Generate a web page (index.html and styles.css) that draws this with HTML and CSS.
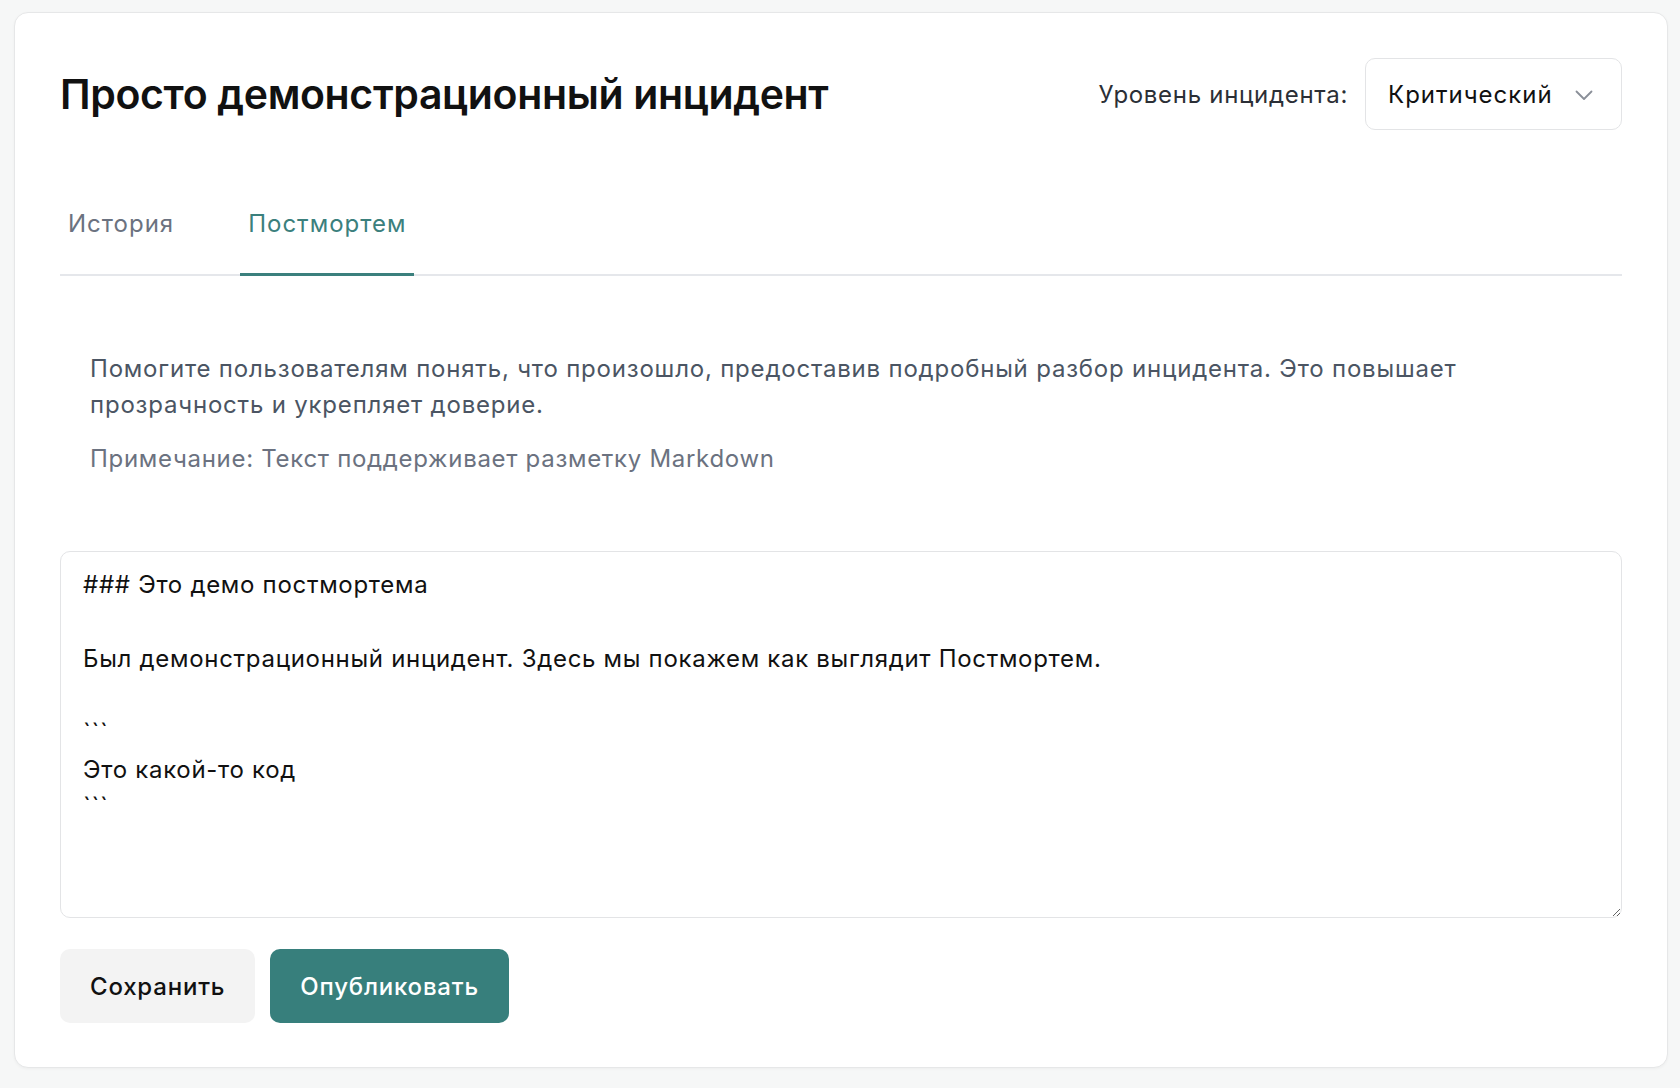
FILE: index.html
```html
<!DOCTYPE html>
<html lang="ru">
<head>
  <meta charset="UTF-8" />
  <meta name="viewport" content="width=device-width, initial-scale=1.0"/>
  <title>Постмортем инцидента</title>
  <link rel="stylesheet" href="styles.css">
</head>
<body>

  <!-- Incident card -->
  <div class="card">

    <!-- Header: title + severity -->
    <div class="header">
      <h1>Просто демонстрационный инцидент</h1>
      <div class="severity">
        <span class="severity-label">Уровень инцидента:</span>
        <div class="select">
          <span>Критический</span>
          <svg class="chevron" width="18" height="11" viewBox="0 0 18 11" fill="none">
            <path d="M1.5 1.5 L9 9 L16.5 1.5" stroke="#8a8f98" stroke-width="1.8" stroke-linecap="round" stroke-linejoin="round"/>
          </svg>
        </div>
      </div>
    </div>

    <!-- Tabs -->
    <div class="tabs">
      <a href="#" class="tab">История</a>
      <a href="#" class="tab active">Постмортем</a>
    </div>

    <!-- Hint -->
    <div class="hint">
      <p class="hint-text">Помогите пользователям понять, что произошло, предоставив подробный разбор инцидента. Это повышает прозрачность и укрепляет доверие.</p>
      <p class="hint-note">Примечание: Текст поддерживает разметку Markdown</p>
    </div>

    <textarea class="editor">### Это демо постмортема

Был демонстрационный инцидент. Здесь мы покажем как выглядит Постмортем.

&#96;&#96;&#96;
Это какой-то код
&#96;&#96;&#96;</textarea>

    <div class="actions">
      <button class="btn btn-secondary">Сохранить</button>
      <button class="btn btn-primary">Опубликовать</button>
    </div>

  </div>

</body>
</html>
```

FILE: styles.css
```css
html, body {
  margin: 0;
  padding: 0;
  background-color: #f6f7f7;
  font-family: Inter, "Noto Sans", sans-serif;
  color: #111111;
}

body {
  padding: 12px 12px 20px 14px;
}

.card {
  background-color: #ffffff;
  border: 1.5px solid #e6e7e8;
  border-radius: 14px;
  box-shadow: 0 1px 3px rgba(0, 0, 0, 0.04);
  padding: 45px 45px 44px 45px;
}

.header {
  display: flex;
  align-items: center;
  justify-content: space-between;
}

.header h1 {
  margin: 0;
  font-size: 41px;
  font-weight: 600;
  letter-spacing: -0.35px;
  color: #111111;
}

.severity {
  display: flex;
  align-items: center;
  gap: 17px;
}

.severity-label {
  font-size: 24px;
  letter-spacing: 0.7px;
  color: #2b2f36;
}

.select {
  display: flex;
  align-items: center;
  justify-content: space-between;
  box-sizing: border-box;
  width: 257px;
  height: 72px;
  padding: 0 28px 0 22px;
  border: 1.5px solid #e3e4e6;
  border-radius: 10px;
  font-size: 24px;
  letter-spacing: 1px;
  color: #111111;
}

.chevron {
  margin-top: 2px;
}

.tabs {
  display: flex;
  gap: 58px;
  margin-top: 64px;
  border-bottom: 2px solid #e5e7eb;
}

.tab {
  padding: 14px 8px 33px;
  font-size: 24px;
  line-height: 32px;
  letter-spacing: 1px;
  color: #6b7280;
  text-decoration: none;
  border-bottom: 3px solid transparent;
  margin-bottom: -2px;
}

.tab.active {
  color: #3b807d;
  border-bottom-color: #3b807d;
}

.hint {
  padding: 75px 30px 74px;
}

.hint p {
  margin: 0;
  font-size: 24px;
  line-height: 36px;
}

.hint-text {
  color: #4b5563;
  letter-spacing: 0.8px;
}

.hint-note {
  margin-top: 18px !important;
  letter-spacing: 0.7px;
  color: #6b7280;
}

.editor {
  display: block;
  box-sizing: border-box;
  width: 100%;
  height: 367px;
  padding: 14px 22px;
  border: 1.5px solid #e3e4e6;
  border-radius: 10px;
  font-family: Inter, "Noto Sans", sans-serif;
  font-size: 24px;
  line-height: 37px;
  letter-spacing: 0.7px;
  color: #111111;
  resize: vertical;
  outline: none;
}

.actions {
  display: flex;
  gap: 15px;
  margin-top: 31px;
}

.btn {
  height: 74px;
  padding: 0 30px;
  border: none;
  border-radius: 10px;
  font-family: Inter, "Noto Sans", sans-serif;
  font-size: 24px;
  font-weight: 500;
  letter-spacing: 0.8px;
  cursor: pointer;
}

.btn-secondary {
  background-color: #f3f3f3;
  color: #111111;
}

.btn-primary {
  background-color: #377f7c;
  color: #ffffff;
}
```
